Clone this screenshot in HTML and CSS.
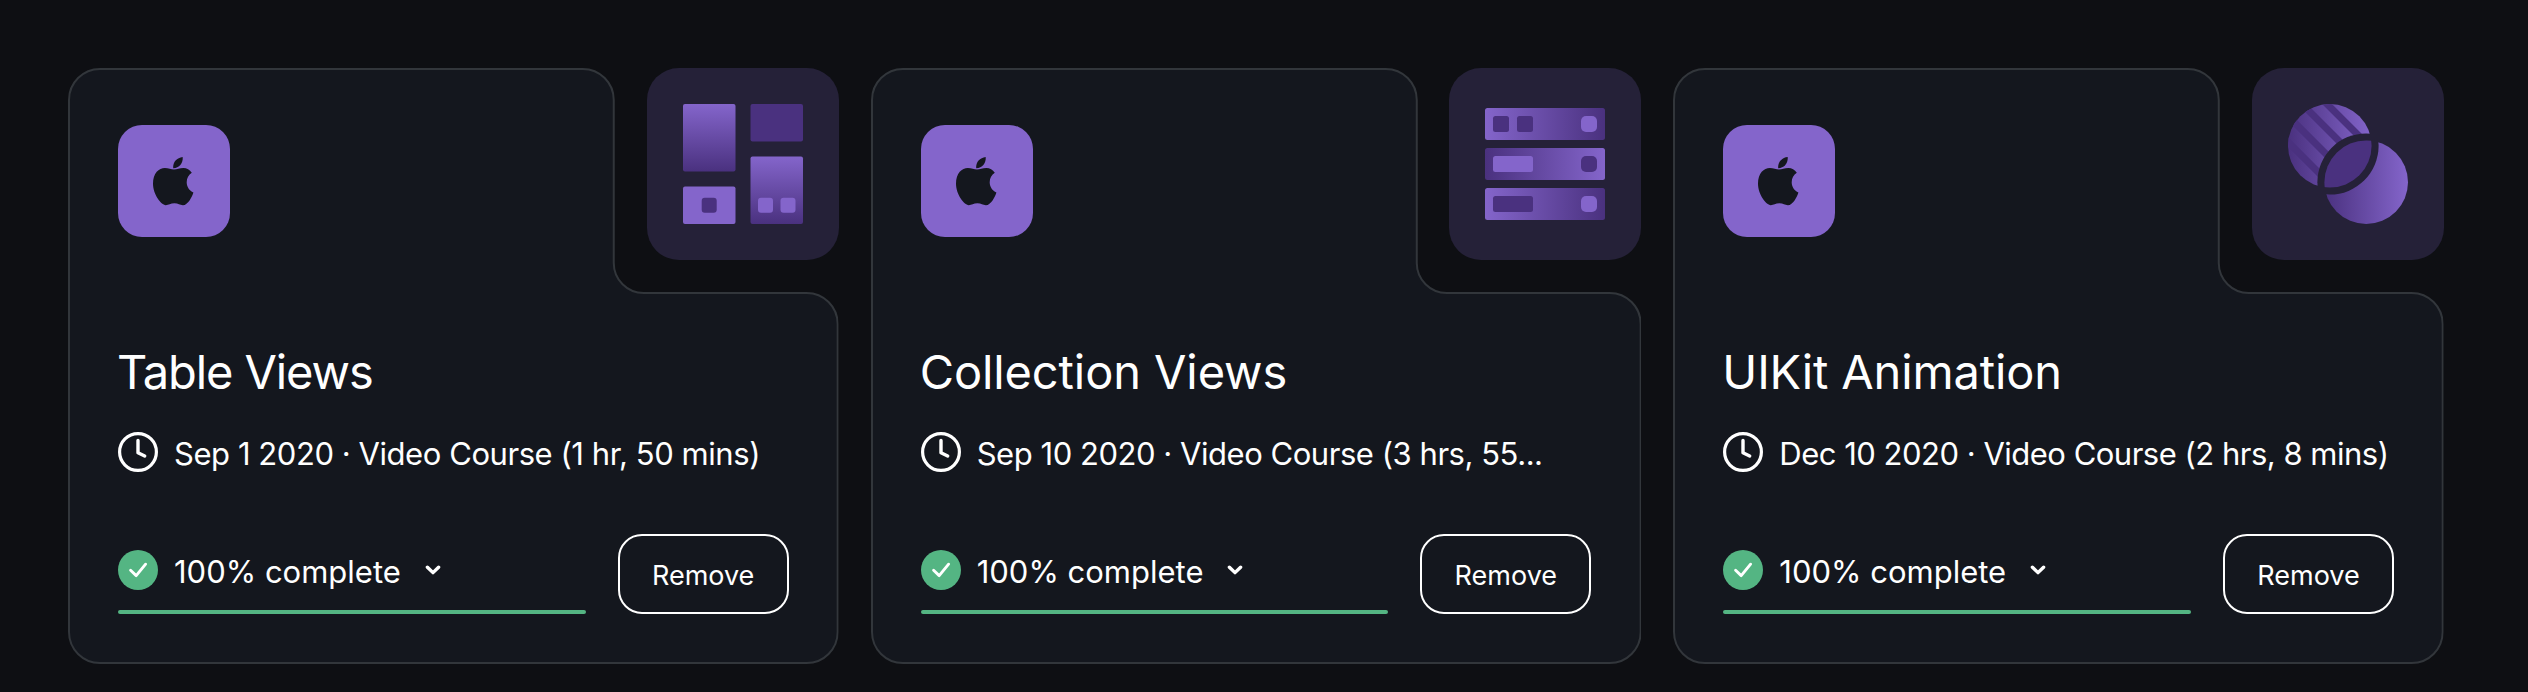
FILE: index.html
```html
<!DOCTYPE html>
<html lang="en">
<head>
<meta charset="utf-8">
<title>Courses</title>
<link rel="stylesheet" href="styles.css">
</head>
<body>
<svg class="defs" width="0" height="0" aria-hidden="true">
  <defs>
    <linearGradient id="down" x1="0" y1="0" x2="0" y2="1"><stop offset="0" stop-color="#8465cb"/><stop offset="1" stop-color="#4a317f"/></linearGradient>
    <linearGradient id="right"><stop offset="0" stop-color="#8465cb"/><stop offset="1" stop-color="#4a317f"/></linearGradient>
    <linearGradient id="left"><stop offset="0" stop-color="#4a317f"/><stop offset="1" stop-color="#8465cb"/></linearGradient>
    <mask id="cutA"><rect width="192" height="192" fill="#fff"/><circle cx="114.2" cy="114.2" r="48.8" fill="#000"/></mask>
    <mask id="cutB"><rect width="192" height="192" fill="#fff"/><circle cx="77.8" cy="77.8" r="48.8" fill="#000"/></mask>
    <clipPath id="inA"><circle cx="77.8" cy="77.8" r="41.8"/></clipPath>
    <symbol id="shape" viewBox="0 0 771 596" preserveAspectRatio="none">
      <path d="M32 1H515A31 31 0 0 1 546 32V195A30 30 0 0 0 576 225H739A31 31 0 0 1 770 256V564A31 31 0 0 1 739 595H32A31 31 0 0 1 1 564V32A31 31 0 0 1 32 1Z"/>
    </symbol>
    <symbol id="apple" viewBox="0 0 112 112">
      <path d="M55.2 43.3C54.6 37 59 32.6 64.7 32C65.3 38 61 43.4 55.2 43.3Z"/>
      <path d="M56 44.4C59 44.4 61.5 43 65.4 43C68.8 43 71.8 44.8 73.8 47.7C70.6 49.8 68.7 53.2 68.7 57.2C68.7 61.8 71.4 65.8 75.4 67.4C74.2 71.4 69.9 80.2 64.9 80.2C61.8 80.2 60.3 78.3 56.4 78.3C52.4 78.3 50.8 80.2 47.8 80.2C43 80.2 35 69.3 35 58.6C35 48 41 43 46.8 43C50.4 43 53.2 44.4 56 44.4Z"/>
    </symbol>
    <symbol id="clock" viewBox="0 0 40 40">
      <circle cx="20" cy="20" r="18.4" fill="none" stroke="#fff" stroke-width="3.2"/>
      <path d="M20 8.5V20.7L26.7 24" fill="none" stroke="#fff" stroke-width="3.4" stroke-linecap="round" stroke-linejoin="round"/>
    </symbol>
    <symbol id="check" viewBox="0 0 40 40">
      <circle cx="20" cy="20" r="20" fill="#54b583"/>
      <path d="M12.6 20.3L18.2 25.6L27.6 14.2" fill="none" stroke="#fff" stroke-width="2.9" stroke-linecap="round" stroke-linejoin="round"/>
    </symbol>
    <symbol id="chevron" viewBox="0 0 16 10">
      <path d="M2.4 2.2L8 7.6L13.6 2.2" fill="none" stroke="#fff" stroke-width="3.4" stroke-linecap="round" stroke-linejoin="round"/>
    </symbol>
  </defs>
</svg>
<main class="cards">
  <article class="card">
    <svg class="outline"><use href="#shape"/></svg>
    <svg class="art" viewBox="0 0 192 192">
      <rect x="36" y="36" width="52.5" height="67.5" rx="2" fill="url(#down)"/>
      <rect x="103.5" y="36" width="52.5" height="37.5" rx="2" fill="#4a317f"/>
      <rect x="36" y="118.5" width="52.5" height="37.5" rx="2" fill="#8465cb"/>
      <rect x="103.5" y="88.5" width="52.5" height="67.5" rx="2" fill="url(#down)"/>
      <rect x="54.7" y="129.7" width="15" height="15" rx="3" fill="#4a317f"/>
      <rect x="111" y="129.7" width="15" height="15" rx="3" fill="#8465cb"/>
      <rect x="133.5" y="129.7" width="15" height="15" rx="3" fill="#8465cb"/>
    </svg>
    <div class="platform"><svg><use href="#apple"/></svg></div>
    <h2 class="title t1">Table Views</h2>
    <div class="meta"><svg><use href="#clock"/></svg><span class="m1">Sep 1 2020 · Video Course (1 hr, 50 mins)</span></div>
    <div class="foot">
      <div class="progress">
        <div class="status"><svg class="tick"><use href="#check"/></svg><span>100% complete</span><svg class="chev"><use href="#chevron"/></svg></div>
        <div class="bar"></div>
      </div>
      <button class="remove">Remove</button>
    </div>
  </article>
  <article class="card">
    <svg class="outline"><use href="#shape"/></svg>
    <svg class="art" viewBox="0 0 192 192">
      <rect x="36" y="40" width="120" height="32" rx="2.5" fill="url(#right)"/>
      <rect x="36" y="80" width="120" height="32" rx="2.5" fill="url(#left)"/>
      <rect x="36" y="120" width="120" height="32" rx="2.5" fill="url(#right)"/>
      <rect x="44" y="48" width="16" height="16" rx="2.5" fill="#4a317f"/>
      <rect x="68" y="48" width="16" height="16" rx="2.5" fill="#4a317f"/>
      <rect x="132" y="48" width="16" height="16" rx="5" fill="#8465cb"/>
      <rect x="44" y="88" width="40" height="16" rx="2.5" fill="#8465cb"/>
      <rect x="132" y="88" width="16" height="16" rx="5" fill="#4a317f"/>
      <rect x="44" y="128" width="40" height="16" rx="2.5" fill="#4a317f"/>
      <rect x="132" y="128" width="16" height="16" rx="5" fill="#8465cb"/>
    </svg>
    <div class="platform"><svg><use href="#apple"/></svg></div>
    <h2 class="title t2">Collection Views</h2>
    <div class="meta"><svg><use href="#clock"/></svg><span class="m2">Sep 10 2020 · Video Course (3 hrs, 55...</span></div>
    <div class="foot">
      <div class="progress">
        <div class="status"><svg class="tick"><use href="#check"/></svg><span>100% complete</span><svg class="chev"><use href="#chevron"/></svg></div>
        <div class="bar"></div>
      </div>
      <button class="remove">Remove</button>
    </div>
  </article>
  <article class="card">
    <svg class="outline"><use href="#shape"/></svg>
    <svg class="art" viewBox="0 0 192 192">
      <g mask="url(#cutA)"><g clip-path="url(#inA)">
        <rect x="36" y="36" width="84" height="84" fill="url(#left)"/>
        <path d="M60 21L130 91M40 26L120 106M20 32L100 112M10 48L100 138" stroke="#4a317f" stroke-width="7"/>
      </g></g>
      <circle cx="114.2" cy="114.2" r="41.8" fill="url(#left)" mask="url(#cutB)"/>
      <circle cx="114.2" cy="114.2" r="41.8" fill="#4a317f" clip-path="url(#inA)"/>
    </svg>
    <div class="platform"><svg><use href="#apple"/></svg></div>
    <h2 class="title t3">UIKit Animation</h2>
    <div class="meta"><svg><use href="#clock"/></svg><span class="m3">Dec 10 2020 · Video Course (2 hrs, 8 mins)</span></div>
    <div class="foot">
      <div class="progress">
        <div class="status"><svg class="tick"><use href="#check"/></svg><span>100% complete</span><svg class="chev"><use href="#chevron"/></svg></div>
        <div class="bar"></div>
      </div>
      <button class="remove">Remove</button>
    </div>
  </article>
</main>
</body>
</html>
```
FILE: styles.css
```css
* { box-sizing: border-box; }
body { margin: 0; background: #0e0f13; color: #fff; font-family: Inter, "Liberation Sans", sans-serif; overflow: hidden; }
svg { display: block; }
.defs { position: absolute; }
.cards { display: grid; grid-template-columns: repeat(3, minmax(0, 1fr)); gap: 32px; padding: 68px 84px 28px 68px; height: 692px; }
.card { position: relative; display: flex; flex-direction: column; padding: 57px 50px 50px; }
.outline { position: absolute; inset: 0; width: 100%; height: 100%; fill: #14171e; stroke: #32363b; stroke-width: 2; }
.art { position: absolute; top: 0; right: 0; width: 192px; height: 192px; border-radius: 32px; background: #252138; }
.platform { position: relative; width: 112px; height: 112px; border-radius: 24px; background: #8465cb; }
.platform svg { width: 112px; height: 112px; fill: #14171e; }
.title { position: relative; margin: 106px 0 0 -1px; height: 58px; line-height: 58px; font-size: 47px; font-weight: 400; white-space: nowrap; }
.t1 { letter-spacing: -1.1px; }
.t2 { letter-spacing: -0.1px; }
.t3 { letter-spacing: -0.15px; }
.meta { position: relative; display: flex; gap: 16px; margin-top: 31px; height: 40px; }
.meta svg, .tick { flex: none; width: 40px; height: 40px; }
.meta span { line-height: 43px; font-size: 31px; white-space: nowrap; }
.meta .m1 { letter-spacing: -0.44px; }
.meta .m2 { letter-spacing: -0.46px; }
.meta .m3 { letter-spacing: -0.5px; }
.foot { position: relative; display: flex; justify-content: space-between; align-items: flex-end; gap: 32px; margin-top: auto; }
.progress { flex: 1; }
.status { display: flex; gap: 16px; height: 60px; }
.status span { line-height: 43px; font-size: 31px; white-space: nowrap; }
.chev { width: 16px; height: 10px; margin: 15px 0 0 8px; }
.bar { height: 4px; border-radius: 2px; background: #54b583; }
.remove { width: 171px; height: 80px; padding: 2px 0 0; border: 2px solid #fff; border-radius: 24px; background: none; color: #fff; font: 400 27px Inter, "Liberation Sans", sans-serif; }
```
